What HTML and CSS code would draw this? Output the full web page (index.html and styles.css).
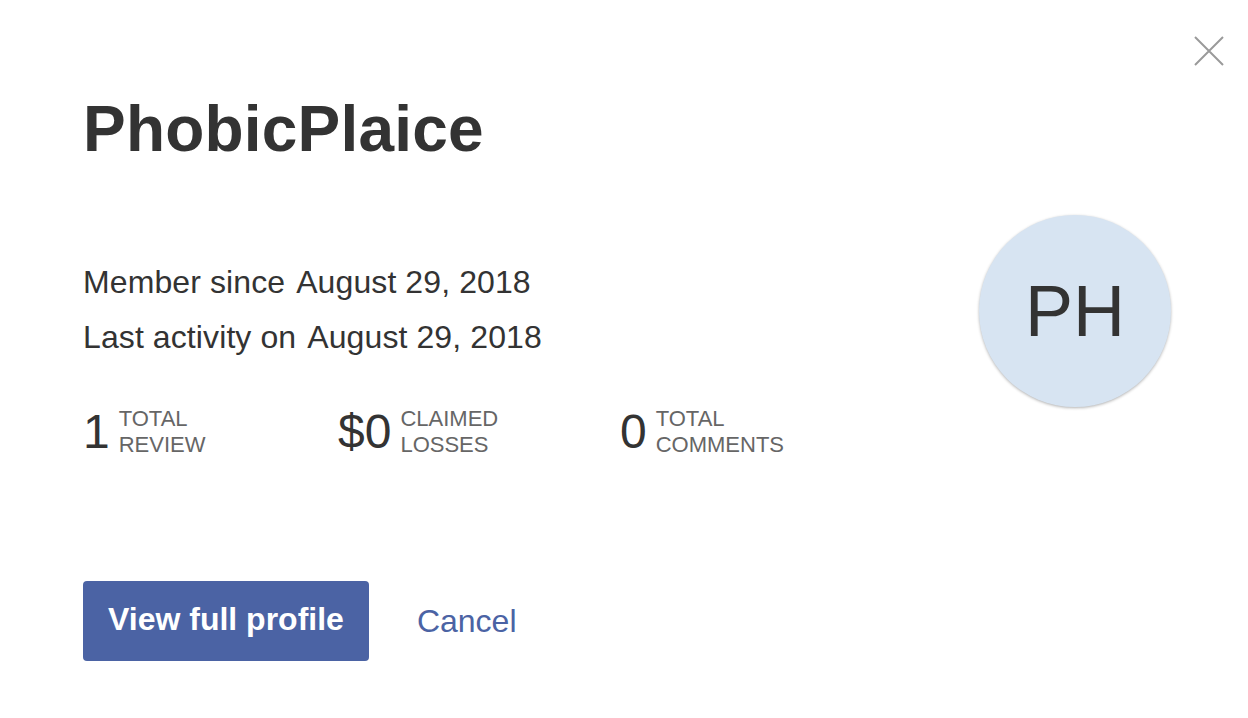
FILE: index.html
```html
<!DOCTYPE html>
<html lang="en">
<head>
<meta charset="utf-8">
<title>PhobicPlaice</title>
<link rel="stylesheet" href="styles.css">
</head>
<body>
<div class="modal">
  <button class="close" aria-label="Close">
    <svg width="32" height="32" viewBox="0 0 32 32"><path d="M2 2 L30 30 M30 2 L2 30" stroke="#9a9a9a" stroke-width="2" fill="none"/></svg>
  </button>
  <h1 class="title">PhobicPlaice</h1>
  <div class="body">
    <div class="info">
      <p class="line">Member since <span class="date">August 29, 2018</span></p>
      <p class="line">Last activity on <span class="date">August 29, 2018</span></p>
      <div class="stats">
        <div class="stat"><span class="num">1</span><span class="label">TOTAL<br>REVIEW</span></div>
        <div class="stat"><span class="num">$0</span><span class="label">CLAIMED<br>LOSSES</span></div>
        <div class="stat"><span class="num">0</span><span class="label">TOTAL<br>COMMENTS</span></div>
      </div>
    </div>
    <div class="avatar">PH</div>
  </div>
  <div class="actions">
    <button class="primary">View full profile</button>
    <button class="cancel">Cancel</button>
  </div>
</div>
</body>
</html>
```
FILE: styles.css
```css
html, body {
  margin: 0;
  padding: 0;
  background: #fff;
}
body {
  font-family: "Liberation Sans", Arial, sans-serif;
  color: #333;
}
.modal {
  position: relative;
  width: 1248px;
  height: 718px;
  box-sizing: border-box;
  padding: 92px 77px 0 83px;
}
.close {
  position: absolute;
  top: 35px;
  right: 23px;
  width: 32px;
  height: 32px;
  padding: 0;
  border: 0;
  background: none;
  cursor: pointer;
}
.close svg { display: block; }
.title {
  margin: 0;
  font-size: 64px;
  line-height: 74px;
  font-weight: 700;
  letter-spacing: 0.2px;
  color: #333;
}
.body {
  display: flex;
  justify-content: space-between;
  align-items: flex-start;
  margin-top: 49px;
}
.info {
  padding-top: 40px;
}
.line {
  margin: 0;
  font-size: 32px;
  line-height: 55px;
  letter-spacing: 0.1px;
  color: #333;
}
.date {
  margin-left: 2px;
}
.stats {
  display: grid;
  grid-template-columns: 255px 282px auto;
  margin-top: 41px;
}
.stat {
  display: flex;
  align-items: center;
  gap: 9px;
}
.num {
  font-size: 48px;
  line-height: 52px;
  color: #333;
}
.label {
  font-size: 22px;
  line-height: 26px;
  color: #666;
}
.avatar {
  width: 192px;
  height: 192px;
  border-radius: 50%;
  background: #d7e4f2;
  box-shadow: 0 1px 3px rgba(0,0,0,0.3);
  display: flex;
  align-items: center;
  justify-content: center;
  font-size: 72px;
  color: #333;
}
.actions {
  display: flex;
  align-items: center;
  margin-top: 123px;
}
.primary {
  height: 80px;
  padding: 0 25px 4px;
  border: 0;
  border-radius: 4px;
  background: #4b63a4;
  color: #fff;
  font-family: "Liberation Sans", Arial, sans-serif;
  font-weight: 700;
  font-size: 32px;
  cursor: pointer;
}
.cancel {
  margin-left: 48px;
  padding: 0;
  border: 0;
  background: none;
  color: #4b63a4;
  font-family: "Liberation Sans", Arial, sans-serif;
  font-size: 32px;
  cursor: pointer;
}
```
